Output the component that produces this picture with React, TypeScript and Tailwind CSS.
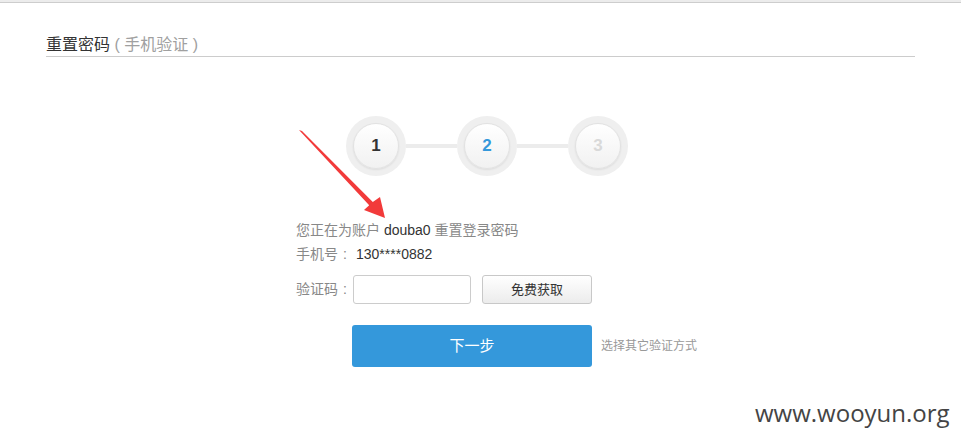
import React from "react";

const FONT = '"Liberation Sans", "Noto Sans CJK SC", sans-serif';

function Step({ n, color }: { n: number; color: string }) {
  return (
    <div className="flex h-[60px] w-[60px] items-center justify-center rounded-full bg-[#efefef]">
      <div className="flex h-[46px] w-[46px] items-center justify-center rounded-full border border-[#e2e2e2] bg-gradient-to-b from-[#ffffff] to-[#f1f1f1] shadow-[0_1px_2px_rgba(0,0,0,0.08)]">
        <span className={`text-[17px] font-bold ${color}`}>{n}</span>
      </div>
    </div>
  );
}

function Label({ text }: { text: string }) {
  return (
    <span className="flex w-[57px] shrink-0">
      {text}
      <span className="inline-block w-[14px] text-center">:</span>
    </span>
  );
}

function Arrow() {
  return (
    <svg className="pointer-events-none absolute left-0 top-0" width="961" height="445">
      <polygon
        points="299,130 302,131 372.8,201.9 380,197 385,218 364,210 369.2,205.3"
        fill="#f23a3a"
      />
    </svg>
  );
}

export default function App() {
  return (
    <div className="relative h-[445px] w-[961px] overflow-hidden bg-white" style={{ fontFamily: FONT }}>
      <div className="h-[3px] border-b border-[#cdcdcd] bg-[#ececec]" />

      <div className="mx-[46px] mt-[32px] border-b border-[#cccccc] pb-[1px]">
        <h1 className="text-[16px] leading-[20px] text-[#333]">
          重置密码<span className="text-[#a0a0a0]"> ( 手机验证 )</span>
        </h1>
      </div>

      <div className="ml-[346px] mt-[59px] flex items-center">
        <Step n={1} color="text-[#333]" />
        <div className="h-[4px] w-[51px] bg-[#ececec]" />
        <Step n={2} color="text-[#3498db]" />
        <div className="h-[4px] w-[51px] bg-[#ececec]" />
        <Step n={3} color="text-[#d9d9d9]" />
      </div>

      <div className="ml-[296px] mt-[44px] text-[14px] text-[#888]">
        <p className="leading-[20px]">
          您正在为账户 <span className="text-[#333]">douba0</span> 重置登录密码
        </p>
        <p className="mt-[4px] flex leading-[20px]">
          <Label text="手机号" />
          <span className="ml-[3px] text-[#333]">130****0882</span>
        </p>
        <div className="mt-[11px] flex items-center">
          <Label text="验证码" />
          <input className="h-[29px] w-[118px] rounded-[3px] border border-[#ccc] bg-white outline-none" />
          <button className="ml-[11px] h-[29px] w-[110px] rounded-[3px] border border-[#c8c8c8] bg-gradient-to-b from-[#ffffff] to-[#ececec] text-[13px] text-[#333]">
            免费获取
          </button>
        </div>
        <div className="mt-[21px] flex items-center">
          <button className="ml-[56px] h-[42px] w-[240px] rounded-[3px] bg-[#3498db] text-[15px] text-white">
            下一步
          </button>
          <span className="ml-[9px] text-[12px] text-[#999]">选择其它验证方式</span>
        </div>
      </div>

      <Arrow />

      <div
        className="absolute left-[755px] top-[399px] text-[24px] leading-[28px] text-[#444]"
        style={{ fontFamily: '"Open Sans", sans-serif' }}
      >
        www.wooyun.org
      </div>
    </div>
  );
}
